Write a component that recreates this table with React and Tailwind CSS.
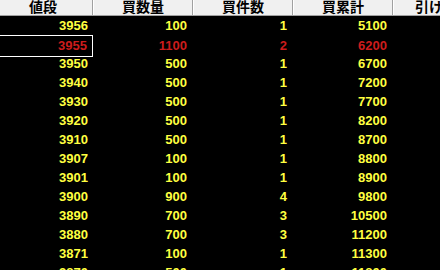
import React from "react";

const cols = ["値段", "買数量", "買件数", "買累計", "引け数量"];

const rows = [
  ["3956", "100", "1", "5100"],
  ["3955", "1100", "2", "6200", true],
  ["3950", "500", "1", "6700"],
  ["3940", "500", "1", "7200"],
  ["3930", "500", "1", "7700"],
  ["3920", "500", "1", "8200"],
  ["3910", "500", "1", "8700"],
  ["3907", "100", "1", "8800"],
  ["3901", "100", "1", "8900"],
  ["3900", "900", "4", "9800"],
  ["3890", "700", "3", "10500"],
  ["3880", "700", "3", "11200"],
  ["3871", "100", "1", "11300"],
  ["3870", "500", "1", "11800"],
];

export default function App() {
  return (
    <div className="w-[440px] h-[270px] overflow-hidden bg-black">
      <div className="-ml-[7px] w-[500px]">
        {/* Header */}
        <div className="grid grid-cols-[100px_100px_100px_100px_100px] h-[16px] bg-[#f0f0f0] border-b border-[#a0a0a0]">
          {cols.map((c) => (
            <div
              key={c}
              className="flex justify-center border-l border-white border-r border-r-[#a0a0a0] text-[14px] leading-[13px] font-bold text-black whitespace-nowrap"
              style={{ fontFamily: '"Noto Sans CJK JP", sans-serif' }}
            >
              {c}
            </div>
          ))}
        </div>

        {/* Rows */}
        {rows.map(([price, qty, cnt, total, sel]) => (
          <div
            key={price}
            className={`grid grid-cols-[100px_100px_100px_100px_100px] h-[19px] text-[13px] font-bold font-['Liberation_Sans',sans-serif] ${
              sel ? "text-[#cc1c1c]" : "text-[#ffff40]"
            }`}
          >
            <div
              className={`flex items-center justify-end pr-[5px] ${
                sel ? "border border-white" : ""
              }`}
            >
              {price}
            </div>
            <div className="flex items-center justify-end pr-[6px]">{qty}</div>
            <div className="flex items-center justify-end pr-[6px]">{cnt}</div>
            <div className="flex items-center justify-end pr-[6px]">{total}</div>
            <div />
          </div>
        ))}
      </div>
    </div>
  );
}
